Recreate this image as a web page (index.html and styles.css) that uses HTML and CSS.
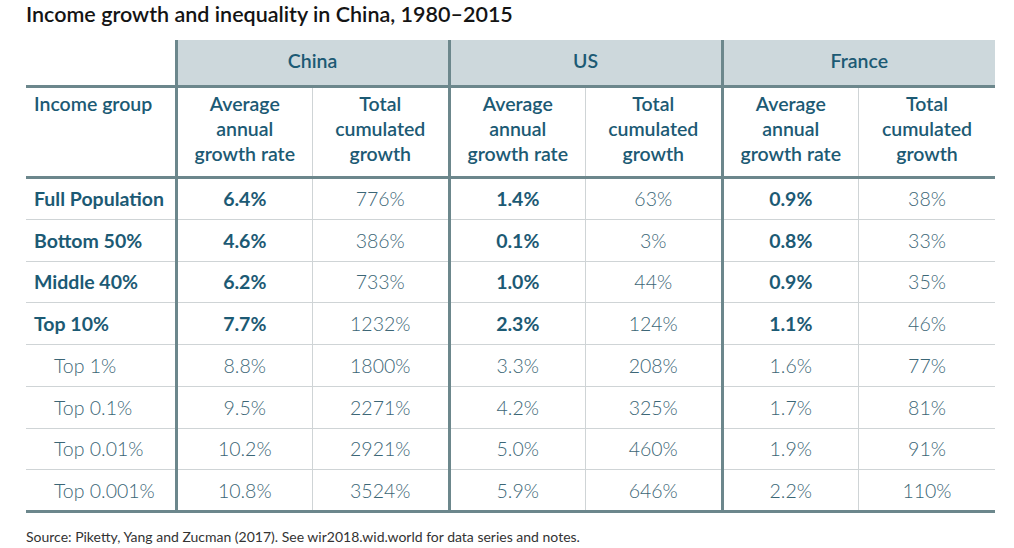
FILE: index.html
```html
<!DOCTYPE html>
<html lang="en">
<head>
<meta charset="utf-8">
<title>Income growth and inequality in China, 1980–2015</title>
<link rel="stylesheet" href="styles.css">
</head>
<body>
<div class="page">
  <h1 class="title">Income growth and inequality in China, 1980–2015</h1>
  <table class="data">
    <colgroup>
      <col class="c-group">
      <col class="c-val"><col class="c-val">
      <col class="c-val"><col class="c-val">
      <col class="c-val"><col class="c-val">
    </colgroup>
    <thead>
      <tr class="countries">
        <th class="blank"></th>
        <th colspan="2" class="country">China</th>
        <th colspan="2" class="country">US</th>
        <th colspan="2" class="country">France</th>
      </tr>
      <tr class="heads">
        <th class="group-head">Income group</th>
        <th class="avg">Average<br>annual<br>growth rate</th>
        <th class="tot">Total<br>cumulated<br>growth</th>
        <th class="avg">Average<br>annual<br>growth rate</th>
        <th class="tot">Total<br>cumulated<br>growth</th>
        <th class="avg">Average<br>annual<br>growth rate</th>
        <th class="tot">Total<br>cumulated<br>growth</th>
      </tr>
    </thead>
    <tbody>
      <tr class="main"><th>Full Population</th><td class="avg">6.4%</td><td class="tot">776%</td><td class="avg">1.4%</td><td class="tot">63%</td><td class="avg">0.9%</td><td class="tot">38%</td></tr>
      <tr class="main"><th>Bottom 50%</th><td class="avg">4.6%</td><td class="tot">386%</td><td class="avg">0.1%</td><td class="tot">3%</td><td class="avg">0.8%</td><td class="tot">33%</td></tr>
      <tr class="main"><th>Middle 40%</th><td class="avg">6.2%</td><td class="tot">733%</td><td class="avg">1.0%</td><td class="tot">44%</td><td class="avg">0.9%</td><td class="tot">35%</td></tr>
      <tr class="main"><th>Top 10%</th><td class="avg">7.7%</td><td class="tot">1232%</td><td class="avg">2.3%</td><td class="tot">124%</td><td class="avg">1.1%</td><td class="tot">46%</td></tr>
      <tr class="sub"><th>Top 1%</th><td class="avg">8.8%</td><td class="tot">1800%</td><td class="avg">3.3%</td><td class="tot">208%</td><td class="avg">1.6%</td><td class="tot">77%</td></tr>
      <tr class="sub"><th>Top 0.1%</th><td class="avg">9.5%</td><td class="tot">2271%</td><td class="avg">4.2%</td><td class="tot">325%</td><td class="avg">1.7%</td><td class="tot">81%</td></tr>
      <tr class="sub"><th>Top 0.01%</th><td class="avg">10.2%</td><td class="tot">2921%</td><td class="avg">5.0%</td><td class="tot">460%</td><td class="avg">1.9%</td><td class="tot">91%</td></tr>
      <tr class="sub last"><th>Top 0.001%</th><td class="avg">10.8%</td><td class="tot">3524%</td><td class="avg">5.9%</td><td class="tot">646%</td><td class="avg">2.2%</td><td class="tot">110%</td></tr>
    </tbody>
  </table>
  <p class="source">Source: Piketty, Yang and Zucman (2017). See wir2018.wid.world for data series and notes.</p>
</div>
</body>
</html>
```
FILE: styles.css
```css
html, body {
  margin: 0;
  padding: 0;
  background: #ffffff;
}
body {
  font-family: Lato, "Open Sans", "Liberation Sans", sans-serif;
  color: #1c5a74;
}
.page {
  width: 1014px;
  height: 548px;
  padding: 0 0 0 26px;
  box-sizing: border-box;
  overflow: hidden;
}
.title {
  margin: 0;
  padding-top: 1px;
  height: 40px;
  box-sizing: border-box;
  font-size: 21.5px;
  line-height: 26px;
  font-weight: 600;
  color: #141414;
}
.data {
  border-collapse: collapse;
  table-layout: fixed;
  width: 969px;
}
.c-group { width: 150px; }
.c-val { width: 136.5px; }

.data th,
.data td {
  padding: 0;
  font-size: 19.5px;
}

/* country row */
.data .countries th {
  height: 41px;
  border-bottom: 3px solid #6c878c;
}
.data .countries .blank {
  background: transparent;
}
.data .countries .country {
  background: #cdd8dc;
  font-weight: 600;
  color: #1c5a74;
  border-left: 3px solid #6c878c;
  text-align: center;
  padding-bottom: 4px;
}

/* column headings */
.data .heads th {
  height: 85px;
  vertical-align: top;
  padding-top: 3px;
  line-height: 25px;
  font-weight: 600;
  color: #1c5a74;
  text-align: center;
  border-bottom: 3px solid #6c878c;
}
.data .heads .group-head {
  text-align: left;
  padding-left: 8px;
}

.data .avg {
  border-left: 3px solid #6c878c;
}
.data .tot {
  border-left: 1px solid #cfd4d6;
}

/* body rows */
.data tbody tr {
  height: 41.75px;
  border-bottom: 1px solid #cfd4d6;
}
.data tbody tr.last {
  border-bottom: 3px solid #6c878c;
}
.data tbody th {
  text-align: left;
  padding-left: 8px;
  padding-top: 0;
  font-weight: 700;
  color: #1c5a74;
}
.data tbody td {
  text-align: center;
  padding-top: 0;
}
.data tbody td.tot {
  font-weight: 300;
  color: #3b6676;
}
.data tr.main td.avg {
  font-weight: 700;
  color: #1c5a74;
}
.data tr.sub th {
  font-weight: 300;
  padding-left: 28px;
  color: #3b6676;
}
.data tr.sub td.avg {
  font-weight: 300;
  color: #3b6676;
}

.source {
  margin: 15px 0 0 0;
  font-size: 14px;
  line-height: 18px;
  font-weight: 400;
  color: #333333;
}
```
